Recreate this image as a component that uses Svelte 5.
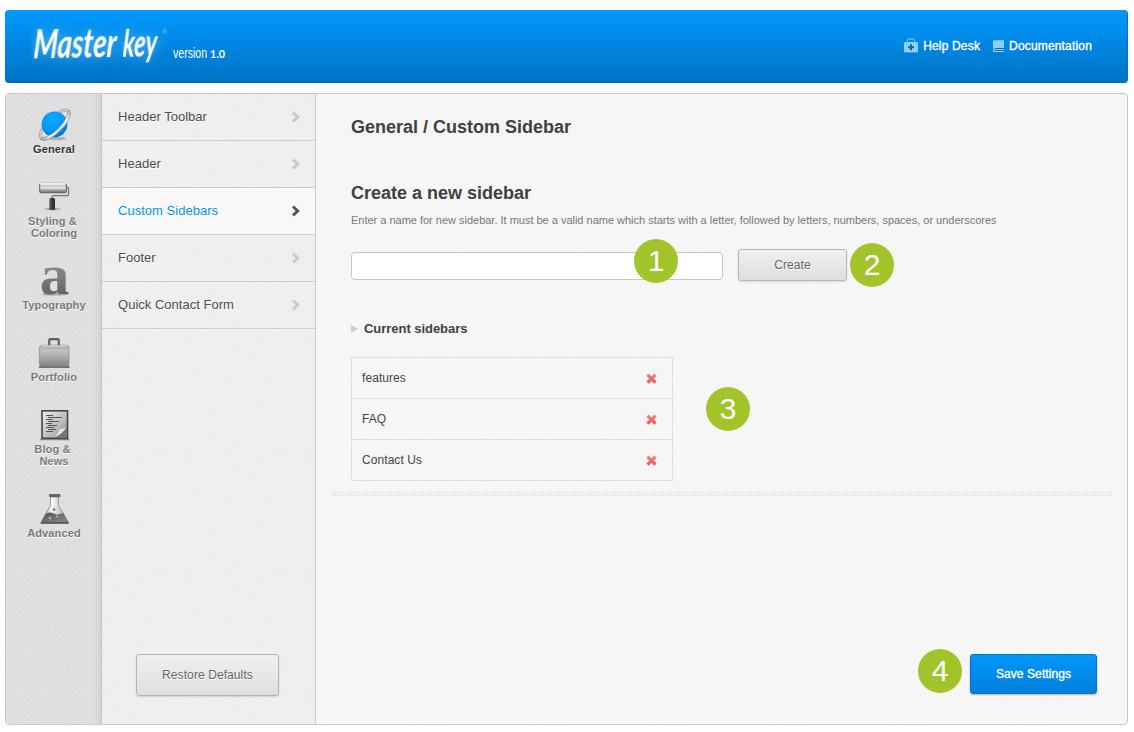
<script>
  const sections = [
    { id: 'general', label: 'General', active: true },
    { id: 'styling', label: 'Styling & \nColoring' },
    { id: 'type', label: 'Typography' },
    { id: 'portfolio', label: 'Portfolio' },
    { id: 'blog', label: 'Blog & \nNews' },
    { id: 'advanced', label: 'Advanced' }
  ];
  const pages = ['Header Toolbar', 'Header', 'Custom Sidebars', 'Footer', 'Quick Contact Form'];
  const current = 'Custom Sidebars';
  const sidebars = ['features', 'FAQ', 'Contact Us'];
</script>

<div class="page">
  <header>
    <svg class="logo" width="210" height="60" viewBox="0 0 210 60">
      <g class="script" transform="rotate(-1 30 40) translate(2.800 0) skewX(-4)">
        <text x="2" y="41" font-size="40" textLength="83" lengthAdjust="spacingAndGlyphs">Master</text>
        <text x="91.500" y="41" font-size="39" textLength="34" lengthAdjust="spacingAndGlyphs">key</text>
      </g>
      <text class="reg" x="131" y="17" font-size="7">®</text>
      <text class="ver" x="142" y="41" font-size="14" textLength="34" lengthAdjust="spacingAndGlyphs">version</text>
      <text class="ver num" x="179" y="41" font-size="11.5" textLength="15" lengthAdjust="spacingAndGlyphs">1.0</text>
    </svg>
    <div class="links">
      <a class="help"><svg width="14" height="16" viewBox="0 0 14 16">
        <path d="M3.500 3.500V2.200Q3.500 1 4.700 1h4.600q1.200 0 1.200 1.200v1.300" fill="none" stroke="#8bd0ff" stroke-width="1" />
        <path d="M0 14.300h14v1H0z" fill="#0567ad" />
        <rect y="4" width="14" height="10.400" rx="1" fill="#8bd0ff" />
        <path d="M7 6.200v6M4 9.200h6" stroke="#0869b2" stroke-width="2" />
      </svg>Help Desk</a>
      <a><svg width="11" height="16" viewBox="0 0 11 16">
        <path d="M0 14h11v1.200H1L0 14z" fill="#0567ad" />
        <path d="M1 2.300h10v12H1.500Q0 14.300 0 13V3.300q0-1 1-1z" fill="#8bd0ff" />
        <path d="M11 10.500H2.500q-1.200 0-1.200 1t1.200 1H11" fill="none" stroke="#0869b2" stroke-width="1" />
      </svg>Documentation</a>
    </div>
  </header>

  <main>
    <nav>
      {#each sections as s}
        <a class:active={s.active}>
          <svg width="48" height="36" viewBox="0 0 48 36">
            {#if s.id === 'general'}
              <defs>
                <radialGradient id="planet" cx=".45" cy=".3" r=".7"><stop offset="0" stop-color="#10abff" /><stop offset=".65" stop-color="#0298fb" /><stop offset="1" stop-color="#0074cc" /></radialGradient>
                <linearGradient id="ring" x1="0" x2="1"><stop offset="0" stop-color="#aaa" /><stop offset=".2" stop-color="#eee" /><stop offset=".5" stop-color="#d5d5d5" /><stop offset=".8" stop-color="#fff" /><stop offset="1" stop-color="#bbb" /></linearGradient>
              </defs>
              <ellipse cx="27" cy="31.500" rx="9" ry="1.700" fill="#666" opacity=".4" />
              <g transform="rotate(-45 24.500 17.500)" fill="none">
                <ellipse cx="24.500" cy="17.500" rx="19" ry="7" stroke="#8a8a8a" stroke-width="2.800" />
                <ellipse cx="24.500" cy="17.500" rx="19" ry="7" stroke="#d5d5d5" stroke-width="1.700" />
              </g>
              <circle cx="24.500" cy="17.300" r="12.900" fill="url(#planet)" />
              <g transform="rotate(-45 24.500 17.500)" fill="none">
                <path d="M5.500 17.500a19 7 0 0 0 38 0" stroke="#808080" stroke-width="3.600" />
                <path d="M5.500 17.500a19 7 0 0 0 38 0" stroke="url(#ring)" stroke-width="2.600" />
              </g>
            {:else if s.id === 'styling'}
              <defs>
                <linearGradient id="roll" x2="0" y2="1"><stop offset="0" stop-color="#bbb" /><stop offset=".15" stop-color="#fff" /><stop offset=".3" stop-color="#c9c9c9" /><stop offset=".55" stop-color="#e4e4e4" /><stop offset=".7" stop-color="#aaa" /><stop offset="1" stop-color="#666" /></linearGradient>
                <radialGradient id="shade"><stop offset="0" stop-color="#444" stop-opacity=".75" /><stop offset="1" stop-color="#666" stop-opacity="0" /></radialGradient>
              </defs>
              <ellipse cx="22.500" cy="30" rx="10" ry="2" fill="url(#shade)" />
              <path d="M36 8.500h1.500q1 0 1 1v6q0 1.200-1.200 1.200H23.500q-1.500 0-1.500 1.500v2" fill="none" stroke="#777" stroke-width="1.300" />
              <rect x="9.300" y="3.300" width="27.400" height="10.700" rx="1.500" fill="url(#roll)" />
              <path d="M9.700 5v7.500M36.300 5v7.500" stroke="#555" stroke-width=".9" />
              <path d="M10.500 13.800h25.500" stroke="#666" stroke-width=".8" />
              <rect x="19.500" y="19" width="5.500" height="11.700" rx="1.500" fill="#333" />
              <path d="M21 20v10" stroke="#666" />
            {:else if s.id === 'type'}
              <defs><linearGradient id="letter" x2="0" y2="1"><stop offset="0" stop-color="#aaa" /><stop offset=".6" stop-color="#777" /><stop offset="1" stop-color="#555" /></linearGradient></defs>
              <ellipse cx="25" cy="31.300" rx="14" ry="1.200" fill="#555" opacity=".4" />
              <text x="9.800" y="30.600" font-family="Liberation Serif, serif" font-weight="700" font-size="57" textLength="29.500" lengthAdjust="spacingAndGlyphs" fill="url(#letter)">a</text>
            {:else if s.id === 'portfolio'}
              <defs><linearGradient id="case" x2="0" y2="1"><stop offset="0" stop-color="#a5a5a5" /><stop offset=".25" stop-color="#c2c2c2" /><stop offset=".6" stop-color="#a8a8a8" /><stop offset="1" stop-color="#808080" /></linearGradient></defs>
              <path d="M19.200 10.500V5.500q0-1.300 1.300-1.300h7q1.300 0 1.300 1.300v5" fill="none" stroke="#444" stroke-width="2.200" />
              <path d="M19 10V5.500q0-1.500 1.500-1.500h7q1.500 0 1.500 1.500V10" fill="none" stroke="#aaa" stroke-width=".6" />
              <path d="M9 32h30.500" stroke="#333" stroke-width="1.300" />
              <rect x="9.300" y="10.200" width="29.800" height="21.200" rx="3" fill="url(#case)" stroke="#858585" stroke-width=".6" />
              <path d="M11.500 11h25.500" stroke="#e6e6e6" stroke-width="1" />
            {:else if s.id === 'blog'}
              <defs><linearGradient id="paper" x2="1" y2="1"><stop offset="0" stop-color="#eee" /><stop offset=".6" stop-color="#bbb" /><stop offset="1" stop-color="#888" /></linearGradient></defs>
              <path d="M10 32.500h29.500" stroke="#555" stroke-width="1.500" opacity=".6" />
              <rect x="12" y="3.800" width="25.500" height="27.500" fill="url(#paper)" stroke="#444" stroke-width="1.600" />
              <path d="M16 8.500h7M18 10.500h14M16 12.500h7M18 14.500h11M16 16.500h6M18 18.500h9M16 20.500h8M18 22.500h8M16 24.500h7" stroke="#555" stroke-width="1" />
              <path d="M36.500 19.500q-2.500 2.500-7 2.500-1 5-6 8.700h13z" fill="#777" />
              <path d="M36.300 19.500q-2.500 2.500-7 2.500-1 5-6 8.500Q33.500 27.500 36.300 19.500z" fill="#e2e2e2" />
            {:else}
              <defs>
                <linearGradient id="glass" x2="1"><stop offset="0" stop-color="#aaa" /><stop offset=".4" stop-color="#f7f7f7" /><stop offset="1" stop-color="#999" /></linearGradient>
                <linearGradient id="fluid" x2="1" y2="1"><stop offset="0" stop-color="#555" /><stop offset="1" stop-color="#888" /></linearGradient>
              </defs>
              <path d="M20.500 6v8.500L11 31.500h27.500L28.500 14.500V6z" fill="url(#glass)" stroke="#888" stroke-width=".8" />
              <path d="M16 22.500q4-2 8 0t9.300-.5l5 9H11z" fill="url(#fluid)" />
              <path d="M10.700 32h28" stroke="#444" stroke-width="1.400" />
              <rect x="19" y="3" width="11.500" height="3" rx=".7" fill="#666" />
              <path d="M22.500 7v9" stroke="#fff" stroke-width="1.200" />
              <circle cx="24" cy="18.500" r="1.200" fill="#666" /><circle cx="20" cy="27" r="1.500" fill="#aaa" /><circle cx="27" cy="25.500" r="1" fill="#bbb" />
            {/if}
          </svg>
          <span>{s.label}</span>
        </a>
      {/each}
    </nav>

    <aside>
      <ul>
        {#each pages as p}
          <li class:selected={p === current}>
            {p}
            <svg width="10" height="12" viewBox="0 0 10 12"><path d="M2 1.500 6.700 6 2 10.500" fill="none" stroke="currentColor" stroke-width="3" /></svg>
          </li>
        {/each}
      </ul>
      <button class="restore">Restore Defaults</button>
    </aside>

    <section>
      <h1>General / Custom Sidebar</h1>
      <h2>Create a new sidebar</h2>
      <p>Enter a name for new sidebar. It must be a valid name which starts with a letter, followed by letters, numbers, spaces, or underscores</p>
      <div class="form">
        <div class="field"><input type="text" aria-label="Sidebar name" /><b class="badge one">1</b></div>
        <div class="field"><button class="create">Create</button><b class="badge two">2</b></div>
      </div>
      <h3><svg width="7" height="8" viewBox="0 0 7 8"><path d="M0 0 7 4 0 8z" fill="#cfcfcf" /></svg>Current sidebars</h3>
      <div class="list">
        {#each sidebars as name}
          <div class="row">
            {name}
            <svg width="12" height="12" viewBox="0 0 12 12"><defs><linearGradient id="cross" gradientUnits="userSpaceOnUse" x1="0" y1="0" x2="0" y2="12"><stop offset="0" stop-color="#ee8a86" /><stop offset="1" stop-color="#f04a4a" /></linearGradient></defs><path d="M1.500 1.700 9.500 9.700M9.500 1.700 1.500 9.700" stroke="url(#cross)" stroke-width="3.200" /></svg>
          </div>
        {/each}
        <b class="badge three">3</b>
      </div>
      <div class="divider"></div>
      <div class="actions"><b class="badge four">4</b><button class="save">Save Settings</button></div>
    </section>
  </main>
</div>

<style>
  :global(body) { background: #fff; }
  .page, button, input { font-family: "Liberation Sans", Arial, sans-serif; }
  .page {
    --grain: url("data:image/svg+xml,%3Csvg xmlns='http://www.w3.org/2000/svg' width='120' height='120'%3E%3Cfilter id='n'%3E%3CfeTurbulence type='fractalNoise' baseFrequency='.7' numOctaves='2' stitchTiles='stitch'/%3E%3CfeColorMatrix values='0 0 0 0 1 0 0 0 0 1 0 0 0 0 1 1.6 0 0 0 -.55'/%3E%3C/filter%3E%3Crect width='120' height='120' filter='url(%23n)' opacity='.35'/%3E%3C/svg%3E");
    box-sizing: border-box; width: 1134px; height: 732px; padding: 10px 6px 7px 5px; display: flex; flex-direction: column; gap: 10px;
  }
  header { box-sizing: border-box; height: 73px; flex: none; display: flex; justify-content: space-between; padding: 7px 35px 0 26px; border-radius: 4px; background: linear-gradient(#0099ff, #0073c3); border-bottom: 1px solid #0369a5; border-right: 1px solid #0872b4; }
  .script { fill: #fff; font-family: Lato, sans-serif; font-style: italic; font-weight: 700; filter: drop-shadow(0 0 6px #7bcaffb0); }
  .reg { fill: #75c3f8; }
  .ver { fill: #fff; }
  .num { font-weight: 700; font-family: Lato, sans-serif; }
  .links { display: flex; gap: 13px; padding-top: 20px; height: 18px; }
  .links a { display: flex; align-items: center; color: #fff; font-size: 12px; letter-spacing: .17px; -webkit-text-stroke: .35px #fff; gap: 5px; }
  main { flex: 1; display: flex; box-sizing: border-box; border: 1px solid #c8c8c8; border-radius: 4px; overflow: hidden; background: var(--grain), #f5f5f5; }
  nav { width: 95px; flex: none; display: flex; flex-direction: column; gap: 24px; padding-top: 13px; background: linear-gradient(90deg, transparent 86px, #0000000d), var(--grain), #dcdcdc; border-right: 1px solid #c5c5c5; }
  nav a { display: flex; flex-direction: column; align-items: center; padding-left: 1px; }
  nav svg { overflow: visible; }
  nav span { white-space: pre; text-align: center; font-size: 11px; line-height: 12px; font-weight: 700; letter-spacing: .12px; color: #7a7a7a; text-shadow: 0 1px 0 #fff; }
  nav .active span { color: #333; }
  aside { width: 213px; flex: none; display: flex; flex-direction: column; justify-content: space-between; align-items: center; background: var(--grain), #ededed; border-right: 1px solid #c8c8c8; padding-bottom: 28px; }
  ul { list-style: none; margin: 0; padding: 0; width: 100%; }
  li { box-sizing: border-box; height: 47px; border-bottom: 1px solid #ccc; display: flex; justify-content: space-between; align-items: center; padding: 0 14px 1px 16px; font-size: 13px; letter-spacing: .02px; color: #4c4c4c; text-shadow: 0 1px 0 #fff; }
  li svg { color: #c9c9c9; }
  li.selected { background: #f8f8f8; color: #0590fa; }
  li.selected svg { color: #555; }
  button { box-sizing: border-box; padding: 0 0 1px; font-size: 12px; letter-spacing: .09px; border-radius: 3px; }
  .restore, .create { color: #666; background: linear-gradient(#f0f0f0, #dedede); border: 1px solid #b5b5b5; box-shadow: 0 1px 2px #0002; text-shadow: 0 1px 0 #fff; }
  .restore { width: 143px; height: 42px; margin-right: 2px; }
  .create { width: 109px; height: 32px; display: block; padding-bottom: 0; }
  section { flex: 1; display: flex; flex-direction: column; padding: 0 30px 30px 35px; }
  h1, h2 { margin: 0; font-size: 18px; line-height: 22px; color: #404040; }
  h1 { margin-top: 22px; }
  h2 { margin-top: 44px; }
  p { margin: 9px 0 0; font-size: 11px; line-height: 14px; letter-spacing: -.01px; color: #777; white-space: nowrap; }
  .form { display: flex; align-items: center; gap: 15px; margin-top: 22px; }
  .field { position: relative; }
  input { display: block; box-sizing: border-box; width: 372px; height: 28px; margin-top: 1px; border: 1px solid #c5c5c5; border-radius: 4px; background: #fff; padding: 0 8px; }
  h3 { display: flex; align-items: center; gap: 6px; margin: 39px 0 0; height: 17px; font-size: 13px; letter-spacing: -.04px; color: #404040; }
  .list { position: relative; width: 322px; box-sizing: border-box; margin-top: 20px; border: 1px solid #dedede; border-bottom: 0; }
  .row { box-sizing: border-box; height: 41px; display: flex; justify-content: space-between; align-items: center; padding: 0 14px 0 10px; border-bottom: 1px solid #dedede; font-size: 12px; letter-spacing: .07px; color: #444; }
  .row svg { position: relative; top: 1px; }
  .divider { height: 5px; margin: 10px -16px 0 -18px; background: radial-gradient(circle at .5px .5px, #dadada .6px, transparent .8px) 0 0 / 2px 2px; }
  .actions { margin-top: auto; display: flex; justify-content: flex-end; position: relative; }
  .save { width: 127px; height: 40px; color: #fff; background: linear-gradient(#0097fb, #0080db); border: 1px solid #0672be; box-shadow: 0 1px 2px #0004; -webkit-text-stroke: .35px #fff; }
  .badge { position: absolute; width: 44px; height: 44px; border-radius: 50%; background: #a2c42b; color: #fff; font-size: 30px; line-height: 43px; text-align: center; font-weight: 400; }
  .one { left: 283px; top: -12px; }
  .two { left: 112px; top: -6px; }
  .three { left: 354px; top: 29px; }
  .four { right: 135px; top: -5px; }
</style>
